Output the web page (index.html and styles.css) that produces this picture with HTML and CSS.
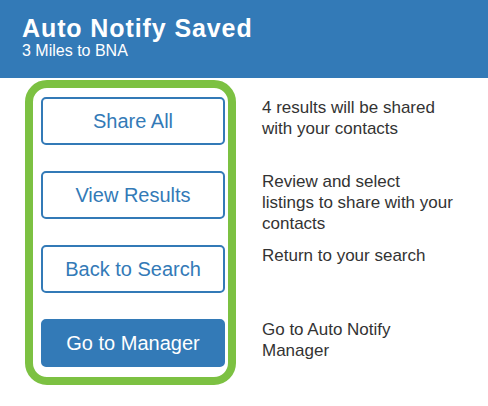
FILE: index.html
```html
<!DOCTYPE html>
<html lang="en">
<head>
<meta charset="utf-8">
<title>Auto Notify Saved</title>
<link rel="stylesheet" href="styles.css">
</head>
<body>
<header class="header">
  <h1 class="title">Auto Notify Saved</h1>
  <div class="subtitle">3 Miles to BNA</div>
</header>
<main class="content">
  <div class="actions">
    <button class="btn btn-outline">Share All</button>
    <button class="btn btn-outline">View Results</button>
    <button class="btn btn-outline">Back to Search</button>
    <button class="btn btn-primary">Go to Manager</button>
  </div>
  <div class="descriptions">
    <p class="desc">4 results will be shared with your contacts</p>
    <p class="desc">Review and select listings to share with your contacts</p>
    <p class="desc">Return to your search</p>
    <p class="desc">Go to Auto Notify Manager</p>
  </div>
</main>
</body>
</html>
```
FILE: styles.css
```css
html, body {
  margin: 0;
  padding: 0;
  background: #ffffff;
  font-family: "Liberation Sans", Arial, Helvetica, sans-serif;
}

.header {
  background: #337ab7;
  color: #ffffff;
  height: 78px;
  box-sizing: border-box;
  padding: 14px 22px 0 22px;
}

.title {
  margin: 0;
  font-size: 25px;
  line-height: 28px;
  font-weight: bold;
  letter-spacing: 0.9px;
}

.subtitle {
  font-size: 16px;
  line-height: 18px;
}

.content {
  display: flex;
  align-items: flex-start;
  padding: 2px 0 0 25px;
}

.actions {
  display: flex;
  flex-direction: column;
  gap: 26px;
  width: 211px;
  box-sizing: border-box;
  border: 8px solid #7cc142;
  border-radius: 22px;
  padding: 9px 3px 10px 8px;
  margin-right: 26px;
}

.btn {
  display: flex;
  align-items: center;
  justify-content: center;
  height: 48px;
  width: 100%;
  box-sizing: border-box;
  border: 2px solid #337ab7;
  border-radius: 5px;
  font-family: "Liberation Sans", Arial, Helvetica, sans-serif;
  font-size: 20px;
  padding: 0;
  margin: 0;
}

.btn-outline {
  background: #ffffff;
  color: #337ab7;
}

.btn-primary {
  background: #337ab7;
  color: #ffffff;
}

.descriptions {
  display: flex;
  flex-direction: column;
  gap: 26px;
  width: 194px;
  padding-top: 17px;
}

.desc {
  margin: 0;
  height: 48px;
  font-size: 17px;
  line-height: 21px;
  color: #333333;
}
```
